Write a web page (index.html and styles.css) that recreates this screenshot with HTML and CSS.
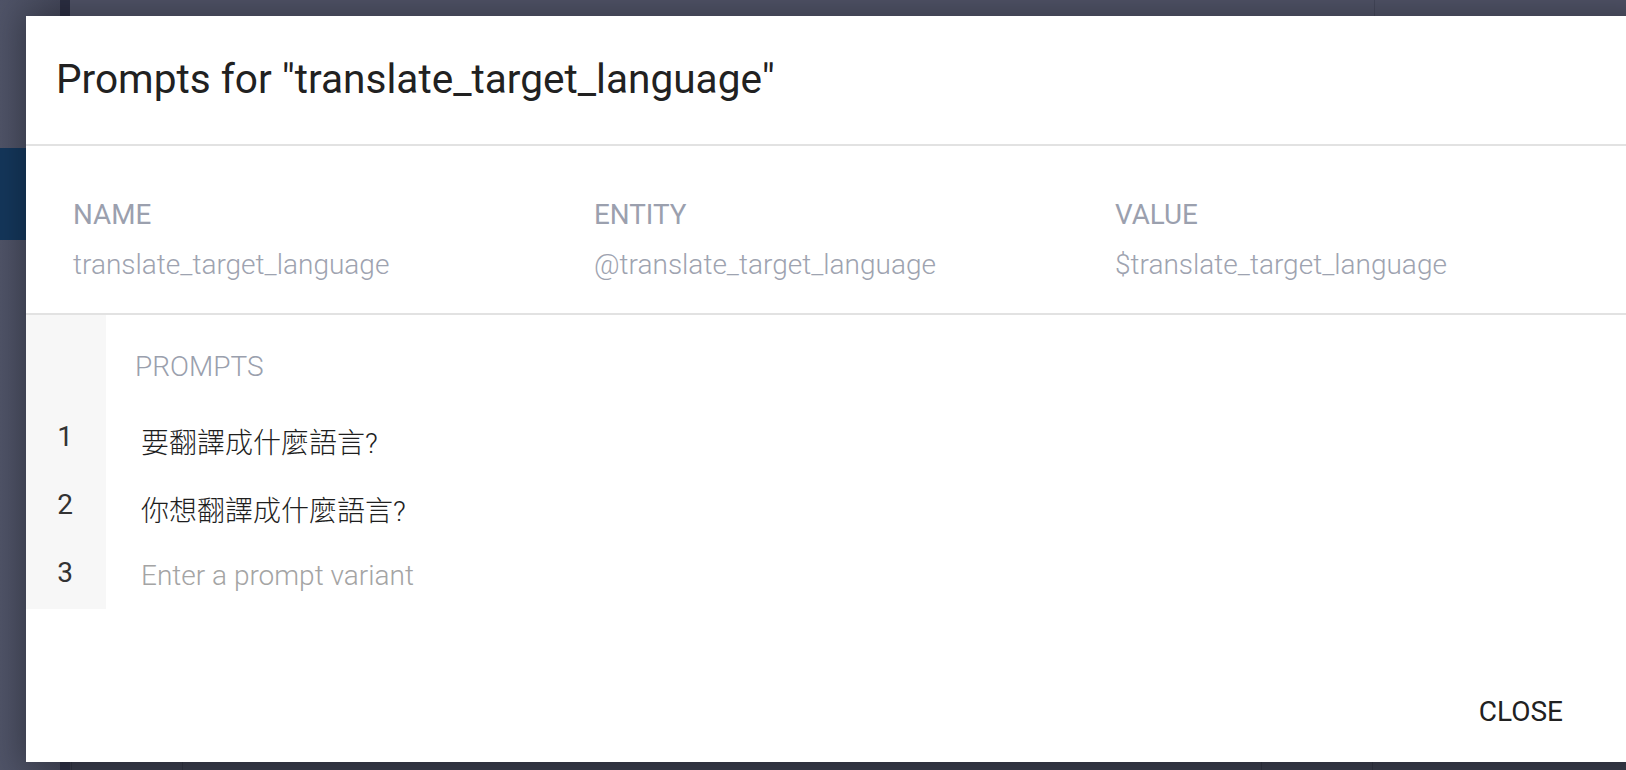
FILE: index.html
```html
<!DOCTYPE html>
<html lang="zh-Hant">
<head>
<meta charset="utf-8">
<title>Prompts</title>
<link rel="stylesheet" href="styles.css">
</head>
<body>
<div class="app">
  <aside class="rail">
    <div class="rail-band"></div>
  </aside>
  <div class="rail-edge"></div>
  <main class="main">
    <div class="main-top">
      <div class="main-col main-col-a"></div>
      <div class="main-col main-col-b"></div>
    </div>
    <div class="main-bottom">
      <div class="mb-cell mb-a"></div>
      <div class="mb-cell mb-b"></div>
      <div class="mb-cell mb-c"></div>
      <div class="mb-cell mb-d"></div>
    </div>
  </main>
</div>

<div class="dialog" role="dialog">
  <header class="dialog-header">
    <h2 class="dialog-title">Prompts for "translate_target_language"</h2>
  </header>

  <section class="info">
    <div class="info-col">
      <div class="info-label">NAME</div>
      <div class="info-value">translate_target_language</div>
    </div>
    <div class="info-col">
      <div class="info-label">ENTITY</div>
      <div class="info-value">@translate_target_language</div>
    </div>
    <div class="info-col">
      <div class="info-label">VALUE</div>
      <div class="info-value">$translate_target_language</div>
    </div>
  </section>

  <section class="prompts">
    <div class="prow prow-head">
      <div class="pnum"></div>
      <div class="pcell"><span class="prompts-label">PROMPTS</span></div>
    </div>
    <div class="prow">
      <div class="pnum">1</div>
      <div class="pcell"><input class="pinput pinput-filled" type="text" value="要翻譯成什麼語言?"></div>
    </div>
    <div class="prow">
      <div class="pnum">2</div>
      <div class="pcell"><input class="pinput pinput-filled" type="text" value="你想翻譯成什麼語言?"></div>
    </div>
    <div class="prow">
      <div class="pnum">3</div>
      <div class="pcell"><input class="pinput" type="text" placeholder="Enter a prompt variant"></div>
    </div>
  </section>

  <footer class="dialog-actions">
    <button class="btn-close" type="button">CLOSE</button>
  </footer>
</div>
</body>
</html>
```

FILE: styles.css
```css
* { box-sizing: border-box; }

html, body {
  margin: 0;
  padding: 0;
  width: 100%;
  height: 100%;
  overflow: hidden;
}

body {
  font-family: Roboto, "Noto Sans CJK TC", sans-serif;
  background: #4e5266;
  position: relative;
}

/* ---------- backdrop app ---------- */
.app {
  display: flex;
  height: 770px;
  width: 100%;
}

.rail {
  width: 60px;
  background: linear-gradient(90deg, #4f5367 0%, #4a4e61 60%, #45485b 100%);
  display: flex;
  flex-direction: column;
}

.rail-band {
  margin-top: 148px;
  height: 92px;
  background: #14365a;
}

.rail-edge {
  width: 10px;
  background: #2b2e42;
}

.main {
  flex: 1;
  display: flex;
  flex-direction: column;
  background: #4f5266;
}

.main-top {
  flex: 1;
  display: flex;
}

.main-col-a {
  width: 1305px;
  border-right: 1px solid #44475a;
}

.main-col-b {
  flex: 1;
}

.main-bottom {
  height: 8px;
  display: flex;
  background: #383b4a;
}

.mb-cell {
  border-right: 1px solid #2f3240;
}

.mb-a { width: 2px; }
.mb-b { width: 111px; }
.mb-c { width: 1079px; }
.mb-d { width: 111px; }

/* ---------- dialog ---------- */
.dialog {
  position: absolute;
  left: 26px;
  top: 16px;
  width: 1620px;
  height: 746px;
  background: #ffffff;
  display: flex;
  flex-direction: column;
  box-shadow: 0 0 30px 4px rgba(0, 0, 0, 0.28);
}

.dialog-header {
  padding: 40px 0 41px 30px;
  border-bottom: 2px solid #e2e2e2;
}

.dialog-title {
  margin: 0;
  font-size: 40.6px;
  line-height: 47px;
  font-weight: 400;
  color: #212121;
}

.info {
  display: grid;
  grid-template-columns: 521px 521px 521px;
  padding: 49px 0 29px 47px;
  border-bottom: 2px solid #e2e2e2;
}

.info-label {
  font-size: 27.8px;
  line-height: 39px;
  font-weight: 400;
  color: #9ba0ae;
}

.info-value {
  margin-top: 11px;
  font-size: 28px;
  line-height: 39px;
  font-weight: 300;
  color: #9ea3b0;
}

.prompts {
  display: flex;
  flex-direction: column;
}

.prow {
  display: flex;
  height: 68px;
}

.prow-head {
  height: 90px;
}

.pnum {
  width: 80px;
  background: #f7f7f7;
  font-size: 28px;
  line-height: 39px;
  padding-top: 12px;
  padding-right: 2px;
  text-align: center;
  color: #333333;
  font-weight: 400;
}

.pcell {
  flex: 1;
  display: flex;
  align-items: flex-start;
}

.prompts-label {
  display: block;
  padding: 32px 0 0 29px;
  font-size: 28px;
  line-height: 39px;
  font-weight: 300;
  color: #9aa0ad;
}

.pinput {
  border: none;
  outline: none;
  background: transparent;
  margin: 15px 0 0 35px;
  padding: 0;
  width: 900px;
  height: 39px;
  font-family: Roboto, "Noto Sans CJK TC", sans-serif;
  font-size: 28px;
  line-height: 39px;
  font-weight: 300;
  color: #1e1e1e;
}

.pinput-filled {
  margin-top: 19px;
}

.pinput::placeholder {
  color: #a4a4a4;
  font-weight: 300;
  opacity: 1;
}

.dialog-actions {
  margin-top: auto;
  display: flex;
  justify-content: flex-end;
  padding: 0 70px 21px 0;
}

.btn-close {
  border: none;
  background: transparent;
  padding: 10px 13px;
  font-family: Roboto, sans-serif;
  font-size: 28px;
  line-height: 39px;
  font-weight: 400;
  letter-spacing: 0;
  color: #212121;
  cursor: pointer;
}
```
